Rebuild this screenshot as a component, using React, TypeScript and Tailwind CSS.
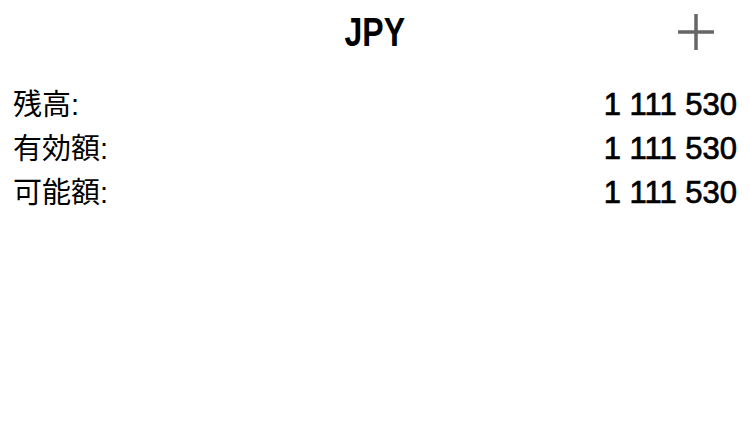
import React from 'react';

const ROWS = [
  { label: '残高:', value: '1 111 530' },
  { label: '有効額:', value: '1 111 530' },
  { label: '可能額:', value: '1 111 530' },
];

export default function App() {
  return (
    <div className="w-[750px] h-[422px] bg-white overflow-hidden">
      <header className="grid grid-cols-[1fr_auto_1fr] items-center h-[64px] px-[36px]">
        <div />
        <h1 className="w-[62px] flex justify-center text-[40px] leading-none font-bold text-black font-['Liberation_Sans',sans-serif]">
          <span className="inline-block scale-x-[0.8]">JPY</span>
        </h1>
        <div className="flex justify-end">
          <button className="w-[36px] h-[36px] text-[#666]" aria-label="add">
            <svg viewBox="0 0 36 36" className="w-full h-full" stroke="currentColor" strokeWidth="3.5">
              <line x1="18" y1="0" x2="18" y2="36" />
              <line x1="0" y1="18" x2="36" y2="18" />
            </svg>
          </button>
        </div>
      </header>
      <div className="pt-[19px] pl-[13px] pr-[13px]">
        {ROWS.map((r) => (
          <div key={r.label} className="flex justify-between items-center h-[44px]">
            <span className="text-[29px] text-black font-['Liberation_Sans','Noto_Sans_CJK_JP',sans-serif] translate-y-[1px]">
              {r.label}
            </span>
            <span className="text-[31px] text-black font-['Liberation_Sans',sans-serif] [-webkit-text-stroke:0.7px_black]">
              {r.value}
            </span>
          </div>
        ))}
      </div>
    </div>
  );
}
